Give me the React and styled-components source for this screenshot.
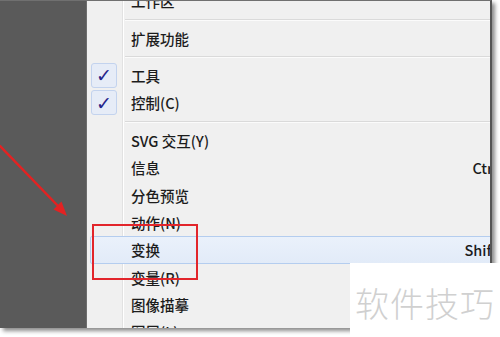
import React from "react"
import styled, { createGlobalStyle, css } from "styled-components"

const GlobalStyle = createGlobalStyle`
  html, body {
    margin: 0;
    padding: 0;
    background: #fff;
    overflow: hidden;
  }
`

const Page = styled.div`
  position: relative;
  width: 500px;
  height: 337px;
  background: #fff;
  font-family: "Noto Sans CJK SC", "Liberation Sans", sans-serif;
`

const Frame = styled.div`
  display: flex;
  width: 492px;
  height: 328px;
  box-sizing: border-box;
  overflow: hidden;
  border-top: 1px solid #707070;
  border-right: 2px solid #555;
  box-shadow: 3px 3px 4px rgba(0, 0, 0, 0.45);
`

const DarkPane = styled.div`
  position: relative;
  flex: 0 0 86px;
  background: #5a5a5a;
  border-right: 1px solid #6e6e6e;
`

const ArrowSvg = styled.svg`
  position: absolute;
  left: 0;
  top: 0;
`

const Menu = styled.div`
  position: relative;
  flex: 1;
  background: #f0f0f0;
  overflow: hidden;
`

const MenuList = styled.div`
  position: relative;
  width: 450px;
  margin-top: -14px;
  display: flex;
  flex-direction: column;

  &::before {
    content: "";
    position: absolute;
    left: 35px;
    top: 0;
    bottom: -40px;
    width: 1px;
    background: #e2e2e2;
    box-shadow: 1px 0 0 #fff;
  }
`

const Item = styled.div`
  position: relative;
  display: flex;
  align-items: center;
  height: 27.4px;
  box-sizing: border-box;
  margin-left: 3px;
  border: 1px solid transparent;
  border-radius: 2px;
  font-size: 14.5px;
  font-weight: 500;
  color: #1c1c1c;
  ${(p) =>
    p.$active &&
    css`
      background: linear-gradient(#eaf1fb, #e2ebf8);
      border-color: #b4cdef;
    `}
`

const CheckSlot = styled.div`
  flex: 0 0 26px;
  height: 25px;
  box-sizing: border-box;
  display: flex;
  align-items: center;
  justify-content: center;
  border-radius: 3px;
  color: #24248a;
  font-size: 19px;
  font-weight: bold;
  font-family: "DejaVu Sans", sans-serif;
  ${(p) =>
    p.$on &&
    css`
      background: #e6ecf7;
      border: 1px solid #c3d3ee;
    `}
`

const Label = styled.span`
  flex: 1;
  margin-left: 14px;
  white-space: nowrap;
`

const Shortcut = styled.span`
  margin-right: 14px;
  white-space: nowrap;
`

const Separator = styled.div`
  height: 10px;
  margin-left: 38px;
  display: flex;
  align-items: center;

  &::after {
    content: "";
    flex: 1;
    height: 1px;
    background: #dadada;
    box-shadow: 0 1px 0 #fbfbfb;
  }
`

const Highlight = styled.div`
  position: absolute;
  left: 92px;
  top: 224px;
  width: 106px;
  height: 56px;
  box-sizing: border-box;
  border: 2px solid #e2252b;
`

const Watermark = styled.div`
  position: absolute;
  left: 350px;
  top: 263px;
  width: 150px;
  height: 74px;
  background: #fff;
  display: flex;
  align-items: center;
  justify-content: center;
  padding-top: 4px;
  box-sizing: border-box;
  font-size: 34px;
  font-weight: 300;
  letter-spacing: 1px;
  color: #d0d0d0;
  white-space: nowrap;
`

const items = [
  { label: "工作区" },
  { sep: true },
  { label: "扩展功能" },
  { sep: true },
  { label: "工具", checked: true },
  { label: "控制(C)", checked: true },
  { sep: true },
  { label: "SVG 交互(Y)" },
  { label: "信息", shortcut: "Ctrl+F8" },
  { label: "分色预览" },
  { label: "动作(N)" },
  { label: "变换", shortcut: "Shift+F8", active: true },
  { label: "变量(R)" },
  { label: "图像描摹" },
  { label: "图层(L)", shortcut: "F7" },
]

const App = () => (
  <Page>
    <GlobalStyle />
    <Frame>
      <DarkPane>
        <ArrowSvg width="86" height="328" viewBox="0 0 86 328">
          <line x1="-2" y1="143" x2="59" y2="206" stroke="#e32222" strokeWidth="2.5" />
          <polygon points="67,215 53.5,208.5 61.5,200.5" fill="#e32222" />
        </ArrowSvg>
      </DarkPane>
      <Menu>
        <MenuList>
          {items.map((it, i) =>
            it.sep ? (
              <Separator key={i} />
            ) : (
              <Item key={i} $active={it.active}>
                <CheckSlot $on={it.checked}>{it.checked ? "✓" : ""}</CheckSlot>
                <Label>{it.label}</Label>
                {it.shortcut && <Shortcut>{it.shortcut}</Shortcut>}
              </Item>
            )
          )}
        </MenuList>
      </Menu>
    </Frame>
    <Highlight />
    <Watermark>软件技巧</Watermark>
  </Page>
)

export default App
